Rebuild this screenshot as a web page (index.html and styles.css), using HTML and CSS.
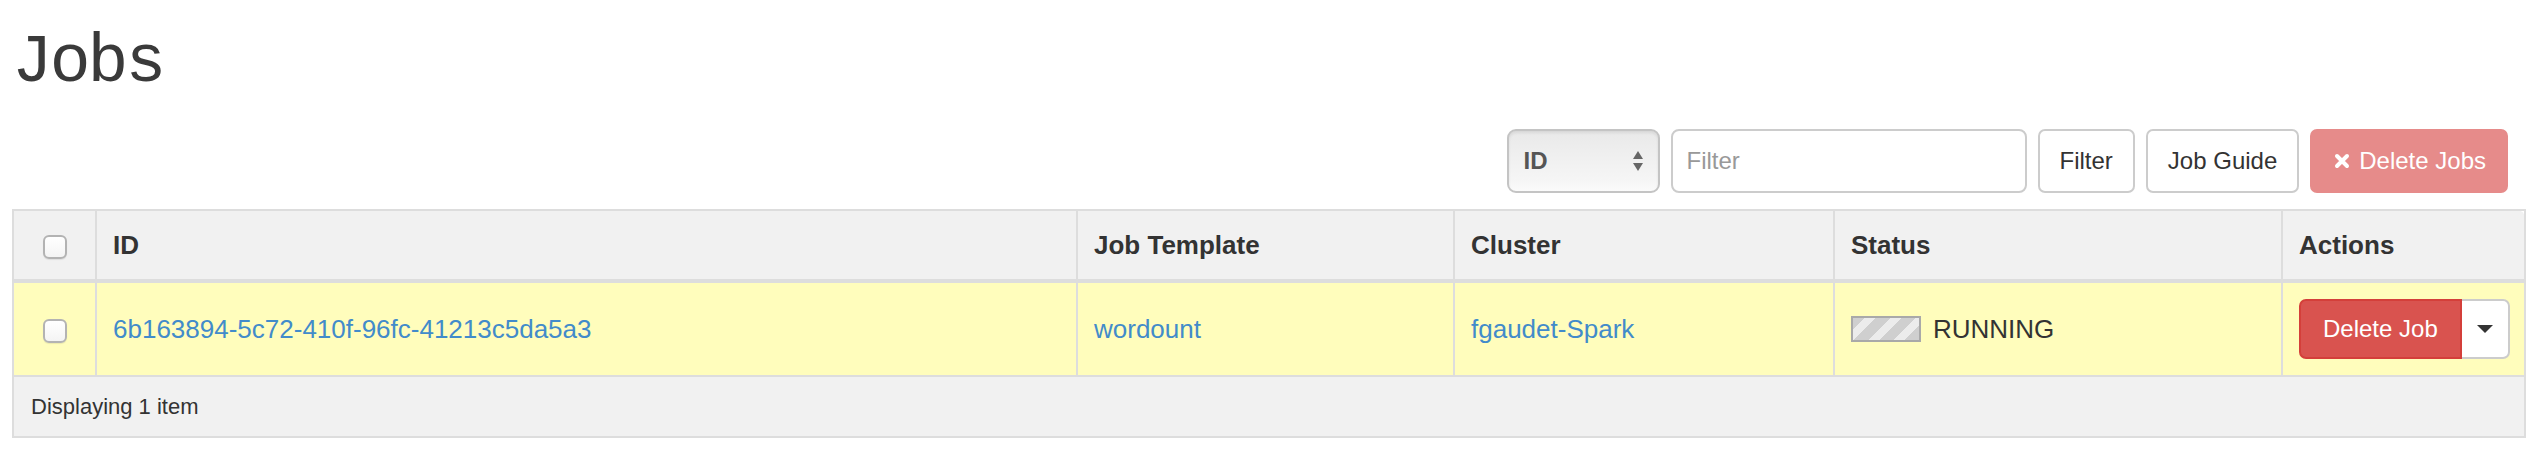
FILE: index.html
```html
<!DOCTYPE html>
<html>
<head>
<meta charset="utf-8">
<link rel="stylesheet" href="styles.css">
</head>
<body>
<div class="page">
  <div class="page-header"><h1>Jobs</h1></div>
  <div class="toolbar">
    <div class="select"><span>ID</span>
      <svg class="updown" width="12" height="22" viewBox="0 0 12 22"><path d="M6 1 L11 9 H1 Z M6 21 L11 13 H1 Z" fill="#666"/></svg>
    </div>
    <div class="filter-input">Filter</div>
    <button class="btn">Filter</button>
    <button class="btn">Job Guide</button>
    <button class="btn btn-danger-disabled"><svg class="xicon" width="16" height="16" viewBox="0 0 16 16"><path d="M3 3 L13 13 M13 3 L3 13" stroke="#fff" stroke-width="4" stroke-linecap="round"/></svg>Delete Jobs</button>
  </div>
  <table class="jobs">
    <colgroup>
      <col class="c-check"><col class="c-id"><col class="c-tpl"><col class="c-cluster"><col class="c-status"><col class="c-actions">
    </colgroup>
    <thead>
      <tr>
        <th class="check"><span class="cb"></span></th>
        <th>ID</th>
        <th>Job Template</th>
        <th>Cluster</th>
        <th>Status</th>
        <th class="last">Actions</th>
      </tr>
    </thead>
    <tbody>
      <tr>
        <td class="check"><span class="cb"></span></td>
        <td><a href="#">6b163894-5c72-410f-96fc-41213c5da5a3</a></td>
        <td><a href="#">wordount</a></td>
        <td><a href="#">fgaudet-Spark</a></td>
        <td><div class="status"><span class="progress"></span>RUNNING</div></td>
        <td>
          <div class="btn-group">
            <button class="btn-del">Delete Job</button><button class="btn-caret"><span class="caret"></span></button>
          </div>
        </td>
      </tr>
    </tbody>
    <tfoot>
      <tr><td colspan="6">Displaying 1 item</td></tr>
    </tfoot>
  </table>
</div>
</body>
</html>
```
FILE: styles.css
```css
html, body {
  margin: 0;
  padding: 0;
  background: #fff;
}
body {
  font-family: "Liberation Sans", Arial, sans-serif;
  font-size: 26px;
  color: #333;
}
.page {
  padding: 0 12px;
}
.page-header h1 {
  margin: 0;
  padding-top: 28px;
  font-family: "Liberation Mono", "Courier New", monospace;
  font-weight: normal;
  font-size: 68px;
  line-height: 70px;
  letter-spacing: -3px;
  color: #3a3a3a;
}
.toolbar {
  display: flex;
  justify-content: flex-end;
  align-items: center;
  gap: 11px;
  margin-top: 31px;
  margin-bottom: 16px;
  padding-right: 16px;
}
.select {
  box-sizing: border-box;
  width: 153px;
  height: 64px;
  border: 2px solid #c4c4c4;
  border-radius: 9px;
  background: linear-gradient(#e9e9e9, #f6f6f6 85%, #fbfbfb);
  box-shadow: inset 0 2px 3px rgba(0,0,0,0.08);
  display: flex;
  align-items: center;
  justify-content: space-between;
  padding: 0 14px 0 15px;
  font-size: 24px;
  font-weight: bold;
  color: #555;
}
.filter-input {
  box-sizing: border-box;
  width: 356px;
  height: 64px;
  border: 2px solid #ccc;
  border-radius: 8px;
  padding: 0 14px;
  display: flex;
  align-items: center;
  font-size: 24px;
  color: #999;
}
.btn {
  box-sizing: border-box;
  height: 64px;
  padding: 0 20px;
  border: 2px solid #ccc;
  border-radius: 7px;
  background: #fff;
  font-family: "Liberation Sans", Arial, sans-serif;
  font-size: 24px;
  color: #333;
  display: flex;
  align-items: center;
  gap: 9px;
  white-space: nowrap;
}
.btn-danger-disabled {
  background: #e68b8a;
  border-color: #e68b8a;
  color: #fff;
  padding: 0 20px 0 22px;
}
.xicon {
  display: block;
}
table.jobs {
  width: 100%;
  border-collapse: collapse;
  table-layout: fixed;
  border: 2px solid #ddd;
}
.c-check { width: 83px; }
.c-id { width: 981px; }
.c-tpl { width: 377px; }
.c-cluster { width: 380px; }
.c-status { width: 448px; }
.c-actions { width: 243px; }
.jobs th, .jobs td {
  border: 2px solid #ddd;
  padding: 0 16px;
  text-align: left;
  vertical-align: middle;
}
.jobs thead th {
  height: 68px;
  background: #f1f1f1;
  border-bottom-width: 4px;
  font-weight: bold;
  font-size: 26px;
  color: #333;
}
.jobs thead th.last {
  border-top-right-radius: 8px;
}
.jobs .check {
  text-align: center;
  padding: 0;
}
.cb {
  display: inline-block;
  box-sizing: border-box;
  width: 24px;
  height: 24px;
  border: 2px solid #b3b3b3;
  border-radius: 6px;
  background: linear-gradient(#fff, #f4f4f4);
  box-shadow: 0 1px 1px rgba(0,0,0,0.08);
  vertical-align: middle;
}
.jobs tbody td {
  height: 92px;
  background: #fffdbc;
}
.jobs a {
  color: #428bca;
  text-decoration: none;
}
.status {
  display: flex;
  align-items: center;
  gap: 12px;
  color: #333;
}
.progress {
  box-sizing: border-box;
  width: 70px;
  height: 26px;
  border: 2px solid #a9a9a9;
  background: repeating-linear-gradient(-45deg, #cfcfcf 0 10px, #ececec 10px 18px);
}
.btn-group {
  display: flex;
  white-space: nowrap;
}
.btn-del {
  box-sizing: border-box;
  height: 60px;
  padding: 0 22px;
  border: 2px solid #d43f3a;
  border-radius: 7px 0 0 7px;
  background: #d9534f;
  color: #fff;
  font-family: "Liberation Sans", Arial, sans-serif;
  font-size: 24px;
  white-space: nowrap;
  flex: none;
}
.btn-caret {
  box-sizing: border-box;
  height: 60px;
  width: 48px;
  flex: none;
  border: 2px solid #ccc;
  border-left: none;
  border-radius: 0 7px 7px 0;
  background: #fff;
  display: flex;
  align-items: center;
  justify-content: center;
  padding: 0;
}
.caret {
  width: 0;
  height: 0;
  border-left: 8px solid transparent;
  border-right: 8px solid transparent;
  border-top: 8px solid #333;
}
.jobs tfoot td {
  height: 59px;
  background: #f1f1f1;
  font-size: 22px;
  color: #333;
  padding-left: 17px;
}
```
